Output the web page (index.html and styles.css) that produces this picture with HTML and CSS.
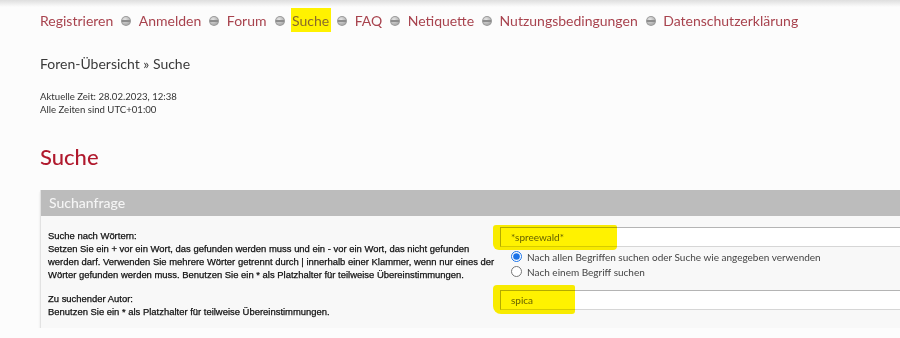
FILE: index.html
```html
<!DOCTYPE html>
<html lang="de">
<head>
  <meta charset="UTF-8">
  <title>Suche</title>
  <link rel="stylesheet" href="styles.css">
</head>
<body>
  <div class="page">
    <ul class="navlinks">
      <li><a href="#">Registrieren</a></li>
      <li><a href="#">Anmelden</a></li>
      <li><a href="#">Forum</a></li>
      <li><a href="#" class="marked">Suche</a></li>
      <li><a href="#">FAQ</a></li>
      <li><a href="#">Netiquette</a></li>
      <li><a href="#">Nutzungsbedingungen</a></li>
      <li><a href="#">Datenschutzerklärung</a></li>
    </ul>

    <div class="crumbs">Foren-Übersicht » Suche</div>

    <p class="times">Aktuelle Zeit: 28.02.2023, 12:38<br>Alle Zeiten sind UTC+01:00</p>

    <h2 class="title">Suche</h2>

    <div class="panel">
      <h3 class="panel-head">Suchanfrage</h3>
      <div class="panel-body">
        <dl class="row">
          <dt>Suche nach Wörtern:<br>Setzen Sie ein + vor ein Wort, das gefunden werden muss und ein - vor ein Wort, das nicht gefunden werden darf. Verwenden Sie mehrere Wörter getrennt durch | innerhalb einer Klammer, wenn nur eines der Wörter gefunden werden muss. Benutzen Sie ein * als Platzhalter für teilweise Übereinstimmungen.</dt>
          <dd>
            <div class="field marker-a"><input type="text" class="inputbox" value="*spreewald*"></div>
            <label class="opt"><input type="radio" name="terms" checked> Nach allen Begriffen suchen oder Suche wie angegeben verwenden</label>
            <label class="opt"><input type="radio" name="terms"> Nach einem Begriff suchen</label>
          </dd>
        </dl>
        <dl class="row">
          <dt>Zu suchender Autor:<br>Benutzen Sie ein * als Platzhalter für teilweise Übereinstimmungen.</dt>
          <dd>
            <div class="field marker-b"><input type="text" class="inputbox" value="spica"></div>
          </dd>
        </dl>
      </div>
    </div>
  </div>
</body>
</html>
```

FILE: styles.css
```css
html {
  overflow: hidden;
}
body {
  margin: 0;
  background: #fcfcfc linear-gradient(#dedede, #fcfcfc 7px) no-repeat;
  font-family: Lato, "Open Sans", sans-serif;
  color: #333;
}
.page {
  padding: 0 0 0 40px;
  width: 1000px;
}

/* Kopfnavigation */
.navlinks {
  list-style: none;
  margin: 0;
  padding: 12px 0 0;
  display: flex;
  font-size: 14px;
  line-height: 17px;
}
.navlinks li {
  display: flex;
  align-items: center;
}
.navlinks li + li::before {
  content: "";
  width: 10px;
  height: 10px;
  margin: 0 7.5px 0 8px;
  border-radius: 50%;
  background:
    linear-gradient(transparent 4px, #8d8d8d 4px, #8d8d8d 6px, transparent 6px),
    radial-gradient(circle at 40% 35%, #e6e6e6, #a4a4a4 70%);
  box-shadow: inset 0 0 0 1px #9a9a9a;
}
.navlinks a {
  color: #a8434e;
  text-decoration: none;
}
.navlinks a.marked {
  color: #8a6a2a;
  background: #fff200;
  padding: 4px 2px 3px 1px;
  margin: -4px -2px -3px -1px;
}

.crumbs {
  margin-top: 26px;
  font-size: 14px;
  line-height: 17px;
  color: #3a3a3a;
}

.times {
  margin: 18px 0 0;
  font-size: 9.6px;
  line-height: 13px;
  color: #333;
}

.title {
  margin: 28px 0 0;
  font-size: 22px;
  line-height: 26px;
  font-weight: 500;
  color: #b0192d;
}

/* Suchformular */
.panel {
  margin-top: 20px;
  background: #f8f8f8;
  border-left: 1px solid #e2e2e2;
  box-shadow: 0 2px 2px #e4e4e4;
}
.panel-head {
  margin: 0;
  height: 26px;
  padding-left: 8px;
  background: #bcbcbc;
  color: #f5f5f5;
  font-size: 14px;
  font-weight: 500;
  line-height: 26px;
}
.panel-body {
  padding: 11px 0 10px 7px;
}
.row {
  display: flex;
  margin: 0;
}
.row + .row {
  margin-top: 9px;
}
.row dt {
  width: 452px;
  padding-top: 2px;
  font-family: "Liberation Sans", Arial, sans-serif;
  font-size: 9.45px;
  line-height: 13px;
  color: #111;
  -webkit-text-stroke: 0.25px #111;
}
.row dd {
  margin: 0;
  flex: 1;
}
.field {
  position: relative;
}
.inputbox {
  display: block;
  box-sizing: border-box;
  width: 100%;
  height: 20px;
  margin: 0;
  padding: 0 10px;
  border: 1px solid #b4b4b4;
  border-bottom-color: #d6d6d6;
  background: #fff;
  font-family: Lato, sans-serif;
  font-size: 10px;
  color: #666;
}
.field::after {
  content: "";
  position: absolute;
  background: #fff200;
  mix-blend-mode: multiply;
  pointer-events: none;
}
.marker-a::after {
  left: -7px;
  top: -2px;
  width: 124px;
  height: 25px;
  border-radius: 3px 2px 4px 6px;
}
.marker-b::after {
  left: -7px;
  top: -5px;
  width: 82px;
  height: 29px;
  border-radius: 4px 2px 3px 8px;
}
.opt {
  display: flex;
  align-items: center;
  height: 15px;
  font-size: 10px;
  color: #444;
}
.opt:first-of-type {
  margin-top: 2px;
}
.opt input {
  width: 11px;
  height: 11px;
  margin: 0 5px 0 11px;
  accent-color: #1a73e8;
}
```
